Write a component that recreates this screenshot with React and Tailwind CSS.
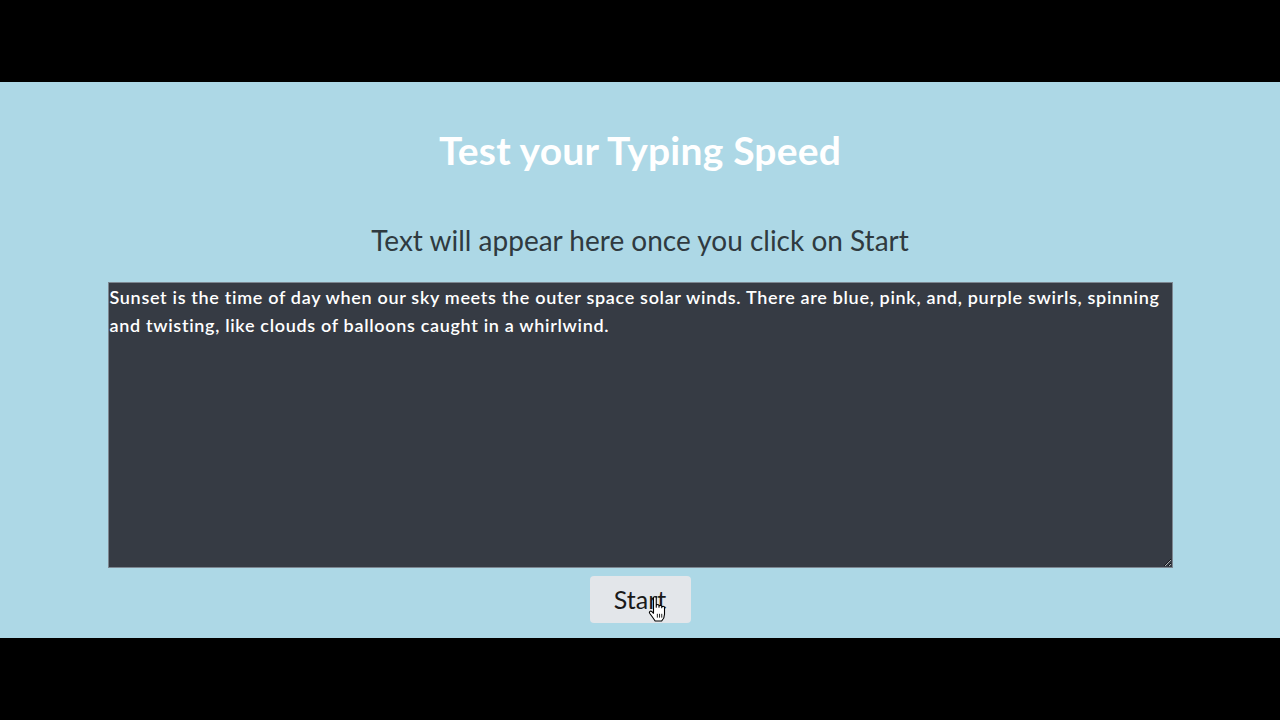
import React from "react";

const text =
  "Sunset is the time of day when our sky meets the outer space solar winds. There are blue, pink, and, purple swirls, spinning and twisting, like clouds of balloons caught in a whirlwind.";

function HandCursor() {
  return (
    <svg
      className="absolute left-[648px] top-[595px]"
      width="22"
      height="31"
      viewBox="0 0 20 28"
    >
      <path
        d="M5 2.5 C5 1.2 7.5 1.2 7.5 2.5 L7.5 11 L7.5 9.5 C7.5 8.3 10 8.3 10 9.5 L10 11 L10 10.2 C10 9 12.5 9 12.5 10.2 L12.5 11.5 L12.5 11 C12.5 9.8 15 9.8 15 11 L15 17.5 C15 20.5 13.5 22.5 12.5 23.5 L6.5 23.5 C5.5 22 3 18.5 1.5 16.5 C0.7 15.3 2.2 13.8 3.5 15 L5 16.5 Z"
        fill="#ffffff"
        stroke="#000000"
        strokeWidth="1"
        strokeLinejoin="round"
      />
      <path d="M8.5 17 L8.5 20.5 M10.5 17 L10.5 20.5 M12.5 17 L12.5 20.5" stroke="#000" strokeWidth="0.8" />
    </svg>
  );
}

export default function App() {
  return (
    <div className="relative w-[1280px] h-[720px] bg-black flex flex-col overflow-hidden">
      <div className="h-[82px] shrink-0" />
      <div
        className="h-[556px] shrink-0 bg-[#add8e6] flex flex-col items-center"
        style={{ fontFamily: "Lato, 'Open Sans', sans-serif" }}
      >
        <h1 className="mt-[46px] text-[39px] leading-[44px] font-bold text-white tracking-[0.2px]">
          Test your Typing Speed
        </h1>
        <p className="mt-[52px] text-[28px] leading-[32px] text-[#2f3a40]">
          Text will appear here once you click on Start
        </p>
        <textarea
          readOnly
          value={text}
          className="mt-[26px] w-[1065px] h-[286px] bg-[#363b44] border border-[#7d8791] text-white text-[18px] leading-[28px] tracking-[0.68px] font-semibold px-[1px] pt-0 pb-0 -mb-0 outline-none resize-y block"
          style={{ fontFamily: "Lato, 'Open Sans', sans-serif", lineHeight: "28px", paddingTop: "0px" }}
        />
        <button className="mt-[8px] w-[101px] h-[47px] rounded-[4px] bg-[#e3e6ea] text-[25px] text-[#1a1a1a]">
          Start
        </button>
      </div>
      <div className="flex-1" />
      <HandCursor />
    </div>
  );
}
